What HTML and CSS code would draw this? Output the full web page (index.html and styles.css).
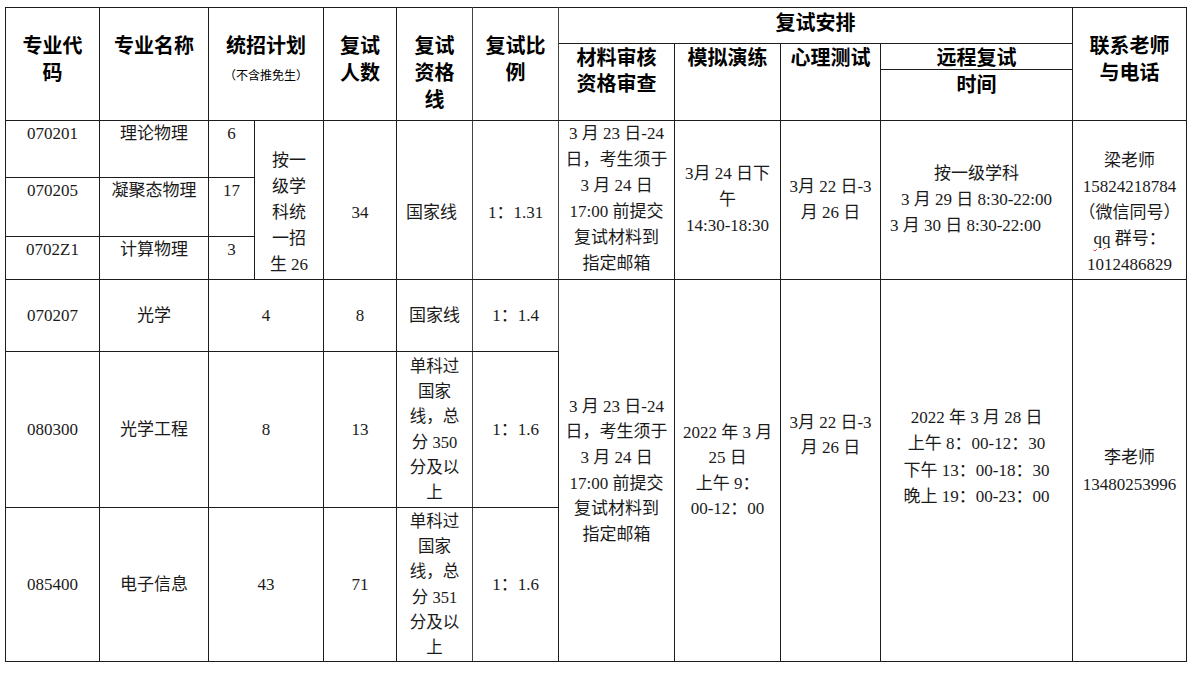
FILE: index.html
```html
<!DOCTYPE html>
<html lang="zh-CN">
<head>
<meta charset="utf-8">
<title>复试安排</title>
<link rel="stylesheet" href="styles.css">
</head>
<body>
<table class="plan">
  <colgroup>
    <col class="w-code"><col class="w-name"><col class="w-plan"><col class="w-plan2">
    <col class="w-num"><col class="w-line"><col class="w-ratio"><col class="w-mat">
    <col class="w-sim"><col class="w-psy"><col class="w-remote"><col class="w-contact">
  </colgroup>
  <thead>
    <tr class="r1">
      <th rowspan="3" class="hd">专业代<br>码</th>
      <th rowspan="3" class="hd">专业名称</th>
      <th rowspan="3" colspan="2" class="hd">统招计划<br><span class="note">（不含推免生）</span></th>
      <th rowspan="3" class="hd">复试<br>人数</th>
      <th rowspan="3" class="hd soft">复试<br>资格<br>线</th>
      <th rowspan="3" class="hd soft">复试比<br>例</th>
      <th colspan="4" class="hd-grp">复试安排</th>
      <th rowspan="3" class="hd">联系老师<br>与电话</th>
    </tr>
    <tr class="r2">
      <th rowspan="2" class="hd-sub">材料审核<br>资格审查</th>
      <th rowspan="2" class="hd-sub">模拟演练</th>
      <th rowspan="2" class="hd-sub">心理测试</th>
      <th class="hd-mid">远程复试</th>
    </tr>
    <tr class="r3">
      <th class="hd-time">时间</th>
    </tr>
  </thead>
  <tbody>
    <tr class="r4">
      <td class="top">070201</td>
      <td class="top">理论物理</td>
      <td class="top">6</td>
      <td rowspan="3" class="top pad-plan">按一<br>级学<br>科统<br>一招<br>生 26</td>
      <td rowspan="3" class="top pad-low">34</td>
      <td rowspan="3" class="top pad-low align-left soft">国家线</td>
      <td rowspan="3" class="top pad-low soft">1：1.31</td>
      <td rowspan="3" class="top">3 月 23 日-24<br>日，考生须于<br>3 月 24 日<br>17:00 前提交<br>复试材料到<br>指定邮箱</td>
      <td rowspan="3" class="top pad-three">3月 24 日下<br>午<br>14:30-18:30</td>
      <td rowspan="3" class="top pad-two">3月 22 日-3<br>月 26 日</td>
      <td rowspan="3" class="top pad-three">按一级学科<br>3 月 29 日 8:30-22:00<br><span class="shift-left">3 月 30 日 8:30-22:00</span></td>
      <td rowspan="3" class="top pad-plan">梁老师<br>15824218784<br>（微信同号）<br><span class="spell">qq</span> 群号：<br>1012486829</td>
    </tr>
    <tr class="r5">
      <td class="top">070205</td>
      <td class="top">凝聚态物理</td>
      <td class="top">17</td>
    </tr>
    <tr class="r6">
      <td class="top">0702Z1</td>
      <td class="top">计算物理</td>
      <td class="top">3</td>
    </tr>
    <tr class="r7">
      <td>070207</td>
      <td>光学</td>
      <td colspan="2">4</td>
      <td>8</td>
      <td class="soft">国家线</td>
      <td class="soft">1：1.4</td>
      <td rowspan="3" class="tight">3 月 23 日-24<br>日，考生须于<br>3 月 24 日<br>17:00 前提交<br>复试材料到<br>指定邮箱</td>
      <td rowspan="3" class="tighter">2022 年 3 月<br>25 日<br>上午 9：<br>00-12：00</td>
      <td rowspan="3" class="top pad-psy">3月 22 日-3<br>月 26 日</td>
      <td rowspan="3" class="top pad-remote">2022 年 3 月 28 日<br>上午 8：00-12：30<br>下午 13：00-18：30<br>晚上 19：00-23：00</td>
      <td rowspan="3" class="loose">李老师<br>13480253996</td>
    </tr>
    <tr class="r8">
      <td>080300</td>
      <td>光学工程</td>
      <td colspan="2">8</td>
      <td>13</td>
      <td class="req soft">单科过<br>国家<br>线，总<br>分 350<br>分及以<br>上</td>
      <td class="soft">1：1.6</td>
    </tr>
    <tr class="r9">
      <td>085400</td>
      <td>电子信息</td>
      <td colspan="2">43</td>
      <td>71</td>
      <td class="req soft">单科过<br>国家<br>线，总<br>分 351<br>分及以<br>上</td>
      <td class="soft">1：1.6</td>
    </tr>
  </tbody>
</table>
</body>
</html>
```

FILE: styles.css
```css
* { box-sizing: border-box; }

body {
  margin: 0;
  background: #ffffff;
  color: #000000;
  font-family: "Liberation Serif", "Noto Sans CJK SC", serif;
}

.plan {
  border-collapse: collapse;
  table-layout: fixed;
  width: 1181px;
  margin: 7px 0 0 5px;
}

.w-code { width: 94px; }
.w-name { width: 109px; }
.w-plan { width: 46px; }
.w-plan2 { width: 69px; }
.w-num { width: 73px; }
.w-line { width: 76px; }
.w-ratio { width: 86px; }
.w-mat { width: 116px; }
.w-sim { width: 106px; }
.w-psy { width: 100px; }
.w-remote { width: 192px; }
.w-contact { width: 114px; }

.r1 { height: 36px; }
.r2 { height: 26px; }
.r3 { height: 51px; }
.r4 { height: 57px; }
.r5 { height: 59px; }
.r6 { height: 43px; }
.r7 { height: 72px; }
.r8 { height: 156px; }
.r9 { height: 154px; }

.plan th,
.plan td {
  border: 1px solid #1c1c1c;
  padding: 0 2px;
  text-align: center;
  white-space: nowrap;
}

.plan .soft { border-left-color: #444444; border-right-color: #444444; }

.plan th {
  font-family: "Noto Sans CJK SC", sans-serif;
  font-size: 20px;
  font-weight: 700;
  line-height: 27px;
  color: #000000;
}

.plan td {
  font-size: 17px;
  font-weight: 400;
  line-height: 26px;
  vertical-align: middle;
  color: #1a1a1a;
}

.plan th.hd { vertical-align: top; padding-top: 23px; }
.plan th.hd-grp { vertical-align: top; }
.plan th.hd-sub { vertical-align: top; line-height: 26px; padding-top: 0; }
.plan th.hd-mid { vertical-align: middle; line-height: 24px; }
.plan th.hd-time { vertical-align: top; }

.note {
  font-size: 12px;
  font-weight: 400;
}

.plan td.top { vertical-align: top; }
.plan td.pad-plan { padding-top: 27px; }
.plan td.pad-low { padding-top: 79px; }
.plan td.pad-three { padding-top: 40px; }
.plan td.pad-two { padding-top: 53px; }
.plan td.align-left { text-align: left; padding-left: 9px; }

.plan td.tight { line-height: 25.6px; }
.plan td.tighter { line-height: 25.3px; }
.plan td.loose { line-height: 27px; }
.plan td.pad-psy { padding-top: 131px; line-height: 24.5px; }
.plan td.pad-remote { padding-top: 125px; line-height: 26.3px; }
.plan td.req { line-height: 25.2px; font-size: 16.5px; }

.shift-left { margin-right: 22px; }

.spell {
  text-decoration: underline wavy #e02020;
  text-decoration-thickness: 1px;
  text-underline-offset: 3px;
}
```
